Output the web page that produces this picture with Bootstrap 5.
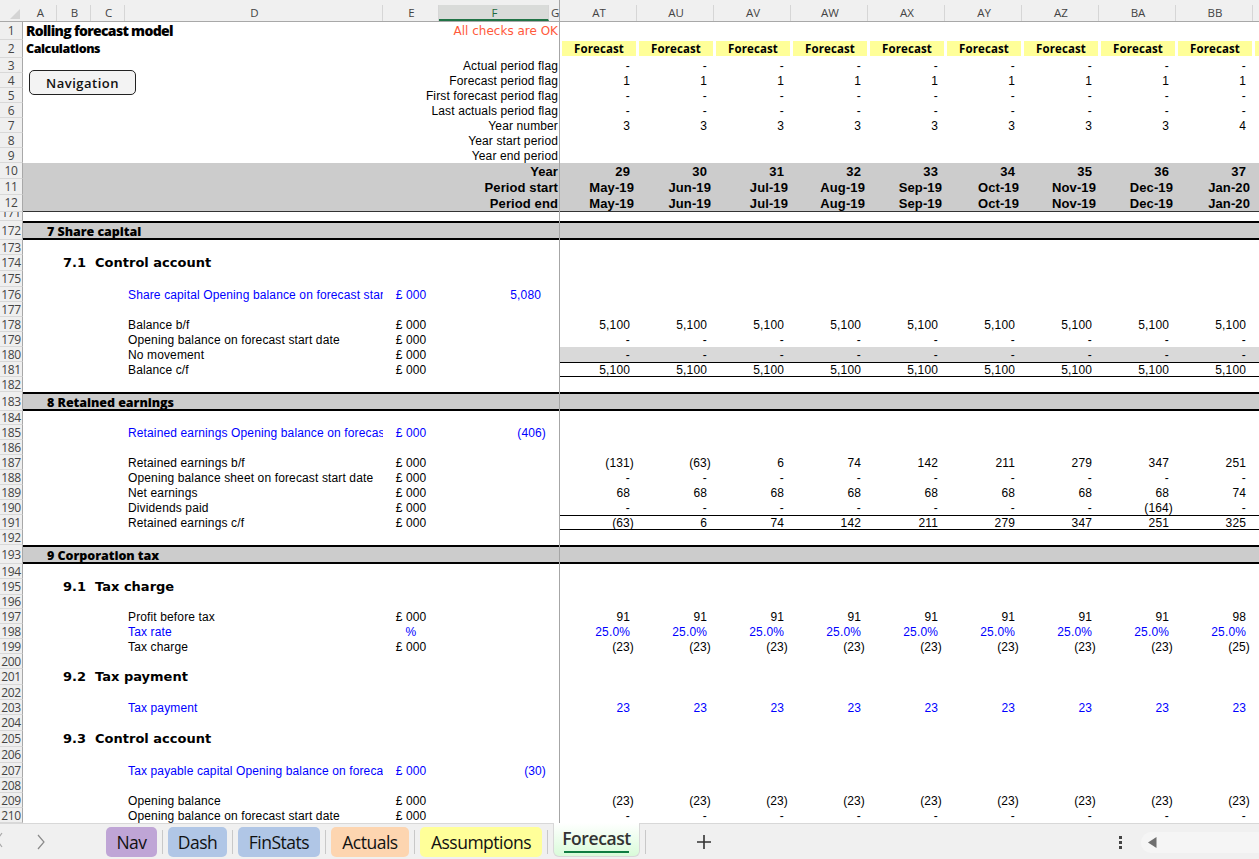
<!DOCTYPE html>
<html lang="en">
<head>
  <meta charset="UTF-8">
  <meta name="viewport" content="width=device-width, initial-scale=1">
  <title>Rolling forecast model</title>
  <link href="https://cdn.jsdelivr.net/npm/bootstrap@5.3.0/dist/css/bootstrap.min.css" rel="stylesheet">
  <style>
    :root { --per: 77px; }
    body { background: #fff; color: #000; font-family: "Liberation Sans", Arial, sans-serif; font-size: 12px; letter-spacing: .13px; }
    .xl-app { height: 859px; width: 1259px; }
    .xl-sheet { height: 823px; position: relative; }

    /* column letters */
    .xl-cols { height: 22px; background: #f0f0f0; border-bottom: 1px solid #a8a8a8; padding-top: 5px; color: #444; font-family: "Open Sans", sans-serif; font-size: 11.5px; letter-spacing: 0; }
    .xl-cols > div { text-align: center; line-height: 16px; padding-left: 2px; border-right: 1px solid #d6d6d6; }
    .xl-cols .xl-on { background: #d9dbd9; border-bottom: 2px solid #217346; color: #1d6b40; height: 16px; }
    .xl-corner { width: 23px; flex: none; border: 0 !important; position: relative; }
    .xl-corner::after { content: ""; position: absolute; right: 3px; bottom: 2px; border-style: solid; border-width: 0 0 10px 10px; border-color: transparent transparent #d4d4d4 transparent; }

    /* grid rows */
    .xl-row { display: flex; }
    .xl-num { width: 23px; flex: none; background: #efefef; border-right: 1px solid #a8a8a8; border-bottom: 1px solid #d8d8d8; color: #444; font-family: "Open Sans", sans-serif; font-size: 12px; text-align: center; overflow: hidden; white-space: nowrap; letter-spacing: -.3px; }
    .xl-body { display: grid; grid-template-columns: 34px 34px 34px 258px 56px 110px 11px repeat(9, var(--per)) 7px; flex: 1 1 auto; min-width: 0; }
    .xl-body > div { white-space: nowrap; min-width: 0; padding-top: 1px; }
    .xl-label { grid-column: 4; overflow: hidden; padding-left: 3px; }
    .xl-unit { grid-column: 5; text-align: center; }
    .xl-fval { grid-column: 6; text-align: right; padding-right: 8px; }
    .xl-fval.xl-paren { padding-right: 3px; }
    .xl-blue { color: #0000ff; }
    .xl-rlabel { grid-column: 5 / 8; text-align: right; padding-right: 2px; }
    .xl-per { text-align: right; padding-right: 7px; }
    .xl-per.xl-paren { padding-right: 3px; }
    .xl-first { grid-column: 8; }

    .xl-body > .xl-title { grid-column: 1 / 5; padding-left: 3px; padding-top: 0; font-family: "Open Sans", sans-serif; font-weight: 800; }
    .xl-t1 { font-size: 14px; letter-spacing: -.7px; }
    .xl-t2 { font-size: 12.5px; letter-spacing: -.45px; }
    .xl-check { grid-column: 5 / 8; text-align: right; padding-right: 2px; color: #ff5a3c; font-family: "DejaVu Sans", sans-serif; font-size: 12px; letter-spacing: 0; }

    .xl-flag { display: block; background: #ffff99; margin: 0 1px 2px 2px; height: 15px; line-height: 15px; text-align: center; font-family: "Open Sans", sans-serif; font-weight: 700; font-size: 11.5px; letter-spacing: .1px; }
    .xl-greyband { background: #cccccc; font-weight: 700; font-size: 13px; letter-spacing: .1px; }
    .xl-endline { border-bottom: 1px solid #333; }

    .xl-sec { background: #cccccc; border-top: 2px solid #000; border-bottom: 2px solid #000; }
    .xl-sec-t { grid-column: 2 / 6; margin-left: -10px; font-family: "Open Sans", sans-serif; font-weight: 800; font-size: 12.5px; letter-spacing: -.05px; }
    .xl-body > .xl-sub-t { grid-column: 2 / 6; padding-left: 6px; padding-top: 0; font-family: "DejaVu Sans", sans-serif; font-weight: 700; font-size: 13px; letter-spacing: 0; }
    .xl-sub-t span { margin-right: 9px; }
    .xl-shade { background: #d9d9d9; }
    .xl-lined { border-top: 1px solid #000; border-bottom: 1px solid #000; }
    .xl-body > .xl-lined { padding-top: 0; }

    .xl-freeze { position: absolute; left: 559px; top: 0; bottom: 0; width: 1px; background: #a6a6a6; }
    .xl-navbtn { position: absolute; left: 29px; top: 70px; width: 107px; height: 25px; border: 1px solid #222; border-radius: 5px; background: #f3f3f3; padding: 0; text-align: center; line-height: 24px; font-family: "Open Sans", sans-serif; font-weight: 600; font-size: 13px; letter-spacing: .5px; color: #111; }

    /* sheet tabs */
    .xl-tabs { height: 36px; background: #f0f0f0; border-top: 1px solid #d8d8d8; position: relative; font-family: "Open Sans", sans-serif; font-size: 17.5px; letter-spacing: -.5px; }
    .xl-arrows { width: 106px; flex: none; }
    .xl-tab { height: 30px; margin-top: 3px; border-radius: 5px; line-height: 30px; text-align: center; color: #111; flex: none; }
    .xl-sep { width: 1px; height: 24px; margin: 6px 5px 0; background: #c8c8c8; flex: none; }
    .xl-tab-on { height: 34px; margin-top: -1px; width: 87px; border: 1px solid #d8d8d8; border-top: 0; border-radius: 0 0 6px 6px; background: linear-gradient(#fff, #d9fbd9); font-weight: 600; color: #333; line-height: 30px; flex: none; position: relative; letter-spacing: -.4px; }
    .xl-tab-on::after { content: ""; position: absolute; left: 10px; right: 10px; bottom: 3px; height: 2px; background: #107c41; }
    .xl-plus { margin-left: 45px; margin-top: 10px; flex: none; }
    .xl-dots { position: absolute; left: 1119px; top: 12px; }
    .xl-track { position: absolute; left: 1141px; top: 8px; right: 0; height: 21px; background: #f5f5f5; border-radius: 10px 0 0 10px; }
    .xl-track svg { display: block; margin: 5px 0 0 7px; }
  </style>
</head>
<body>

<div class="xl-app d-flex flex-column overflow-hidden">
  <div class="xl-sheet overflow-hidden flex-shrink-0">
    <div id="sheet"></div>
    <div class="xl-freeze"></div>
    <div class="xl-navbtn">Navigation</div>
  </div>

  <div class="xl-tabs d-flex flex-shrink-0">
    <div class="xl-arrows position-relative">
      <svg width="106" height="34" viewBox="0 0 106 34">
        <path d="M2 9 L-3 16 L2 23" fill="none" stroke="#a8a8a8" stroke-width="1.2"/>
        <path d="M38 11 L44 18 L38 25" fill="none" stroke="#8a8a8a" stroke-width="1.2"/>
      </svg>
    </div>
    <div class="xl-tab" style="width:51px;background:#bfa5d6">Nav</div>
    <div class="xl-sep"></div>
    <div class="xl-tab" style="width:59px;background:#b0c6e6">Dash</div>
    <div class="xl-sep"></div>
    <div class="xl-tab" style="width:82px;background:#b0c6e6">FinStats</div>
    <div class="xl-sep"></div>
    <div class="xl-tab" style="width:78px;background:#fdd5b0">Actuals</div>
    <div class="xl-sep"></div>
    <div class="xl-tab" style="width:122px;background:#ffff99">Assumptions</div>
    <div class="xl-sep"></div>
    <div class="xl-tab-on text-center">Forecast</div>
    <div class="xl-sep"></div>
    <svg class="xl-plus" width="16" height="16" viewBox="0 0 16 16"><path d="M8 1 V15 M1 8 H15" stroke="#333" stroke-width="1.6"/></svg>
    <svg class="xl-dots" width="4" height="14" viewBox="0 0 4 14"><path d="M0 0h3v3H0zM0 5h3v3H0zM0 10h3v3H0z" fill="#444"/></svg>
    <div class="xl-track"><svg width="9" height="11" viewBox="0 0 9 11"><path d="M8.5 0 V11 L0 5.5 Z" fill="#6f6f6f"/></svg></div>
  </div>
</div>

<script src="https://cdn.jsdelivr.net/npm/bootstrap@5.3.0/dist/js/bootstrap.bundle.min.js"></script>
<script>
  const sheet = document.getElementById('sheet');
  const cols = [['A',34],['B',34],['C',34],['D',258],['E',56],['F',110],['G',11],['AT',77],['AU',77],['AV',77],['AW',77],['AX',77],['AY',77],['AZ',77],['BA',77],['BB',77],['',7]];

  // column letters
  const head = document.createElement('div');
  head.className = 'xl-cols d-flex';
  head.innerHTML = '<div class="xl-corner"></div>' + cols.map(c =>
    `<div class="${c[0] === 'F' ? 'xl-on' : ''}" style="width:${c[1]}px;flex:none">${c[0]}</div>`).join('');
  sheet.appendChild(head);

  function cell(cls, text) {
    const d = document.createElement('div');
    d.className = cls;
    d.textContent = text;
    return d;
  }

  function addRow(num, h, build, bodyCls) {
    const row = document.createElement('div');
    row.className = 'xl-row';
    row.style.height = h + 'px';
    const n = cell('xl-num', num);
    n.style.lineHeight = h + 'px';
    row.appendChild(n);
    const body = document.createElement('div');
    body.className = 'xl-body ' + (bodyCls || '');
    const isSec = bodyCls && bodyCls.includes('xl-sec');
    body.style.lineHeight = (isSec ? h - 4 : h - 1) + 'px';
    body.style.gridAutoRows = (isSec ? h - 4 : h) + 'px';
    row.appendChild(body);
    if (build) build(body);
    sheet.appendChild(row);
    return row;
  }

  function periods(body, vals, cls) {
    vals.forEach((v, i) => {
      let c = 'xl-per ' + (cls || '');
      if (i === 0) c += ' xl-first';
      if (v.endsWith(')')) c += ' xl-paren';
      body.appendChild(cell(c, v));
    });
  }
  const all = v => Array(9).fill(v);

  function line(num, h, label, unit, vals, opt) {
    opt = opt || {};
    addRow(num, h, b => {
      if (label) b.appendChild(cell('xl-label' + (opt.blue ? ' xl-blue' : ''), label));
      if (unit) b.appendChild(cell('xl-unit' + (opt.blue ? ' xl-blue' : ''), unit));
      if (opt.f) b.appendChild(cell('xl-fval xl-blue' + (opt.f.endsWith(')') ? ' xl-paren' : ''), opt.f));
      if (vals) periods(b, vals, (opt.blue ? 'xl-blue ' : '') + (opt.cls || ''));
      if (opt.cls) b.appendChild(cell(opt.cls, ''));  // shading runs on into the cut-off column
    });
  }
  const blank = (num, h) => addRow(num, h || 15);
  const section = (num, text) => addRow(num, 19, b => b.appendChild(cell('xl-sec-t', text)), 'xl-sec');
  function sub(num, n, text) {
    addRow(num, 16, b => {
      const d = cell('xl-sub-t', '');
      d.innerHTML = `<span>${n}</span>${text}`;
      b.appendChild(d);
    });
  }
  function flags(num, label, vals) {
    addRow(num, 15, b => {
      b.appendChild(cell('xl-rlabel', label));
      if (vals) periods(b, vals);
    });
  }

  // frozen top rows
  addRow(1, 18, b => {
    b.appendChild(cell('xl-title xl-t1', 'Rolling forecast model'));
    b.appendChild(cell('xl-check', 'All checks are OK'));
  });
  addRow(2, 18, b => {
    b.appendChild(cell('xl-title xl-t2', 'Calculations'));
    for (let i = 0; i < 10; i++) {
      const w = document.createElement('div');
      if (i === 0) w.className = 'xl-first';
      w.innerHTML = '<span class="xl-flag">' + (i < 9 ? 'Forecast' : '') + '</span>';
      b.appendChild(w);
    }
  });
  flags(3, 'Actual period flag', all('-'));
  flags(4, 'Forecast period flag', all('1'));
  flags(5, 'First forecast period flag', all('-'));
  flags(6, 'Last actuals period flag', all('-'));
  flags(7, 'Year number', ['3','3','3','3','3','3','3','3','4']);
  flags(8, 'Year start period');
  flags(9, 'Year end period');

  const months = ['May-19','Jun-19','Jul-19','Aug-19','Sep-19','Oct-19','Nov-19','Dec-19','Jan-20'];
  function band(num, label, vals, paren) {
    addRow(num, 16, b => {
      b.appendChild(cell('xl-rlabel', label));
      vals.forEach((v, i) => b.appendChild(cell('xl-per' + (paren ? ' xl-paren' : '') + (i === 0 ? ' xl-first' : ''), v)));
    }, 'xl-greyband');
  }
  band(10, 'Year', ['29','30','31','32','33','34','35','36','37']);
  band(11, 'Period start', months, true);
  band(12, 'Period end', months, true);
  sheet.lastChild.style.height = '17px';
  sheet.lastChild.lastChild.classList.add('xl-endline');

  // row 171 is scrolled part way out of view
  const r171 = addRow(171, 9);
  r171.firstChild.innerHTML = '<div style="margin-top:-7px;line-height:15px">171</div>';

  section(172, '7 Share capital');
  blank(173);
  sub(174, '7.1', 'Control account');
  blank(175, 16);
  line(176, 15, 'Share capital Opening balance on forecast star', '£ 000', null, {blue: true, f: '5,080'});
  blank(177);
  line(178, 15, 'Balance b/f', '£ 000', all('5,100'));
  line(179, 15, 'Opening balance on forecast start date', '£ 000', all('-'));
  line(180, 15, 'No movement', '£ 000', all('-'), {cls: 'xl-shade'});
  line(181, 15, 'Balance c/f', '£ 000', all('5,100'), {cls: 'xl-lined'});
  blank(182);

  section(183, '8 Retained earnings');
  blank(184, 14);
  line(185, 15, 'Retained earnings Opening balance on forecas', '£ 000', null, {blue: true, f: '(406)'});
  blank(186);
  line(187, 15, 'Retained earnings b/f', '£ 000', ['(131)','(63)','6','74','142','211','279','347','251']);
  line(188, 15, 'Opening balance sheet on forecast start date', '£ 000', all('-'));
  line(189, 15, 'Net earnings', '£ 000', ['68','68','68','68','68','68','68','68','74']);
  line(190, 15, 'Dividends paid', '£ 000', ['-','-','-','-','-','-','-','(164)','-']);
  line(191, 15, 'Retained earnings c/f', '£ 000', ['(63)','6','74','142','211','279','347','251','325'], {cls: 'xl-lined'});
  blank(192);

  section(193, '9 Corporation tax');
  blank(194);
  sub(195, '9.1', 'Tax charge');
  blank(196, 14);
  line(197, 15, 'Profit before tax', '£ 000', ['91','91','91','91','91','91','91','91','98']);
  line(198, 15, 'Tax rate', '%', all('25.0%'), {blue: true});
  line(199, 15, 'Tax charge', '£ 000', ['(23)','(23)','(23)','(23)','(23)','(23)','(23)','(23)','(25)']);
  blank(200);
  sub(201, '9.2', 'Tax payment');
  blank(202);
  line(203, 15, 'Tax payment', '', all('23'), {blue: true});
  blank(204, 16);
  sub(205, '9.3', 'Control account');
  blank(206, 16);
  line(207, 15, 'Tax payable capital Opening balance on foreca', '£ 000', null, {blue: true, f: '(30)'});
  blank(208);
  line(209, 15, 'Opening balance', '£ 000', all('(23)'));
  line(210, 15, 'Opening balance on forecast start date', '£ 000', all('-'));
</script>

</body>
</html>
